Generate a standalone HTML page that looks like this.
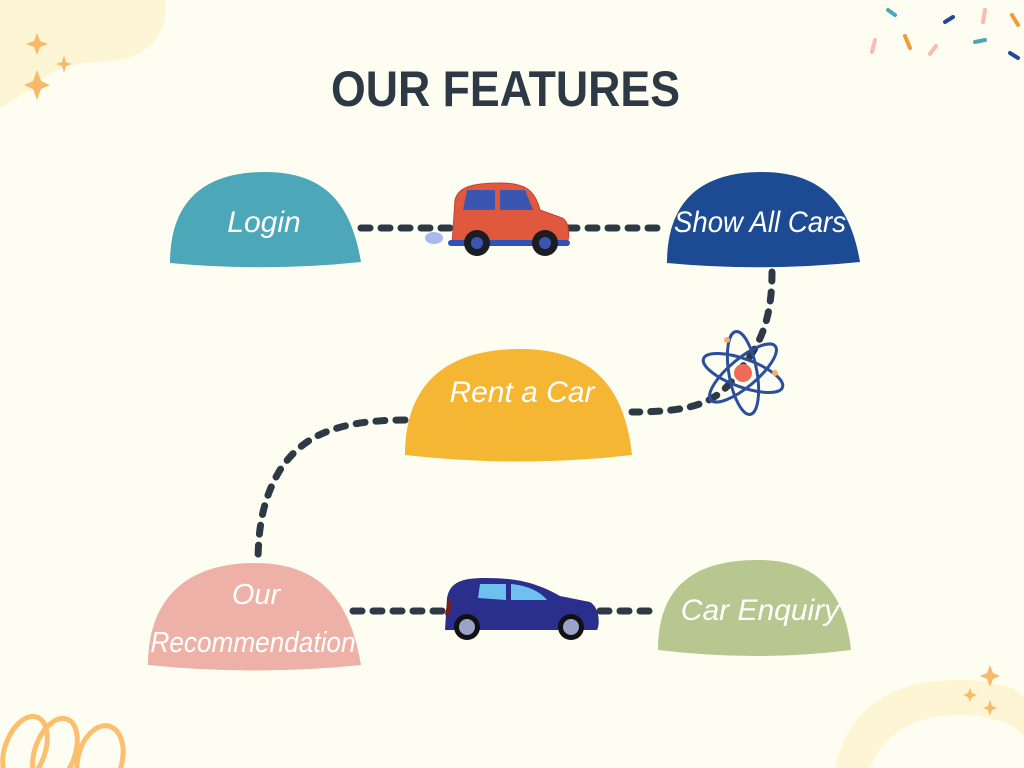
<!DOCTYPE html>
<html><head><meta charset="utf-8"><style>
html,body{margin:0;padding:0;width:1024px;height:768px;overflow:hidden;background:#fefdf2}
svg{display:block}
.t{font-family:"Liberation Sans",sans-serif;font-style:italic;fill:#fff}
</style></head><body>
<svg width="1024" height="768" viewBox="0 0 1024 768">
<rect width="1024" height="768" fill="#fefdf2"/>
<path d="M0,0 H165 C170,40 140,62 100,62 C70,62 50,70 30,90 L0,108 Z" fill="#fdf5d4"/>
<path d="M835,768 C850,700 900,680 960,680 C1000,680 1024,690 1024,700 V768 Z" fill="#fdf5d4"/>
<path d="M870,768 C885,730 920,715 960,715 C1000,715 1024,730 1024,740 V768 Z" fill="#fefdf2"/>
<g fill="#f8b968">
<path d="M37,33 l3,8 8,3 -8,3 -3,8 -3,-8 -8,-3 8,-3z"/>
<path d="M64,55 l2,7 6,2 -6,2 -2,7 -2,-7 -6,-2 6,-2z"/>
<path d="M37,70 l4,11 9,4 -9,4 -4,11 -4,-11 -9,-4 9,-4z"/>
<path d="M990,665 l3,8 7,3 -7,3 -3,8 -3,-8 -7,-3 7,-3z"/>
<path d="M970,688 l2,5 5,2 -5,2 -2,5 -2,-5 -5,-2 5,-2z"/>
<path d="M990,700 l2,6 5,2 -5,2 -2,6 -2,-6 -5,-2 5,-2z"/>
</g>
<g fill="none" stroke="#fcbf6f" stroke-width="5">
<ellipse cx="25" cy="750" rx="20" ry="35" transform="rotate(20 25 750)"/>
<ellipse cx="55" cy="752" rx="20" ry="35" transform="rotate(20 55 752)"/>
<ellipse cx="100" cy="760" rx="22" ry="35" transform="rotate(15 100 760)"/>
</g>
<g stroke-linecap="round" stroke-width="4" fill="none">
<path d="M888,10 l7,5" stroke="#4da6b8"/>
<path d="M945,22 l8,-5" stroke="#1e4b93"/>
<path d="M985,10 l-2,12" stroke="#fbb9b0"/>
<path d="M1012,15 l6,10" stroke="#f29b3a"/>
<path d="M872,52 l3,-12" stroke="#fbb9b0"/>
<path d="M905,36 l5,12" stroke="#f29b3a"/>
<path d="M930,54 l6,-8" stroke="#fbb9b0"/>
<path d="M975,42 l10,-2" stroke="#4da6b8"/>
<path d="M1010,53 l8,5" stroke="#1e4b93"/>
</g>
<text x="331" y="106" font-family="Liberation Sans,sans-serif" font-weight="bold" font-size="50" fill="#2d3a45" textLength="349" lengthAdjust="spacingAndGlyphs">OUR FEATURES</text>
<g fill="none" stroke="#2d3a45" stroke-width="7" stroke-linecap="round" stroke-dasharray="9 11">
<path d="M361,228 H450"/>
<path d="M568,228 H667"/>
<path d="M772,272 C772,320 760,345 740,370 C720,400 700,412 632,412"/>
<path d="M405,420 C330,420 300,440 280,470 C262,500 258,530 258,565"/>
<path d="M353,611 H445"/>
<path d="M600,611 H658"/>
</g>
<path d="M170,263 C170,205 200,172 265,172 C330,172 352,210 361,262 Q265,272 170,263Z" fill="#4ca7b9"/>
<path d="M667,263 C667,205 697,172 762,172 C827,172 851,210 860,262 Q762,272 667,263Z" fill="#1d4b93"/>
<path d="M405,455 C405,385 445,349 520,349 C595,349 625,390 632,455 Q520,468 405,455Z" fill="#f5b633"/>
<path d="M148,665 C148,600 185,563 255,563 C320,563 350,600 361,665 Q255,676 148,665Z" fill="#eeb1a7"/>
<path d="M658,650 C658,590 690,560 758,560 C820,560 845,595 851,650 Q758,662 658,650Z" fill="#b7c78f"/>
<text class="t" x="264" y="232" text-anchor="middle" font-size="30">Login</text>
<text class="t" x="760" y="232" text-anchor="middle" font-size="30" textLength="172" lengthAdjust="spacingAndGlyphs">Show All Cars</text>
<text class="t" x="522" y="402" text-anchor="middle" font-size="30">Rent a Car</text>
<text class="t" x="256" y="604" text-anchor="middle" font-size="29">Our</text>
<text class="t" x="253" y="652" text-anchor="middle" font-size="29" textLength="205" lengthAdjust="spacingAndGlyphs">Recommendation</text>
<text class="t" x="760" y="620" text-anchor="middle" font-size="30">Car Enquiry</text>
<g>
<ellipse cx="434" cy="238" rx="9" ry="6" fill="#a9b8f0"/>
<path d="M452,245 L455,200 C458,188 470,183 500,183 C525,183 535,190 540,210 L562,218 C570,222 570,240 566,245 Z" fill="#e0593f" stroke="#c6402e" stroke-width="1"/>
<path d="M463,210 L467,190 H495 V210Z" fill="#3a56b0"/>
<path d="M500,210 V190 H525 L533,210Z" fill="#3a56b0"/>
<rect x="448" y="240" width="122" height="6" rx="3" fill="#3052b5"/>
<circle cx="477" cy="243" r="13" fill="#1c1c24"/><circle cx="477" cy="243" r="6" fill="#3a56b0"/>
<circle cx="545" cy="243" r="13" fill="#1c1c24"/><circle cx="545" cy="243" r="6" fill="#3a56b0"/>
</g>
<g fill="none" stroke="#2b4f9a" stroke-width="3">
<ellipse cx="743" cy="373" rx="42" ry="14" transform="rotate(20 743 373)"/>
<ellipse cx="743" cy="373" rx="42" ry="14" transform="rotate(-40 743 373)"/>
<ellipse cx="743" cy="373" rx="42" ry="14" transform="rotate(80 743 373)"/>
</g>
<circle cx="743" cy="373" r="9" fill="#f06a5a"/>
<circle cx="727" cy="340" r="3" fill="#f5b06a"/><circle cx="775" cy="373" r="3" fill="#f5b06a"/>
<g>
<path d="M445,630 L447,598 C450,582 462,578 485,578 C515,578 535,582 560,596 L590,602 C600,608 600,625 597,630 Z" fill="#2a2f8e"/>
<path d="M478,598 L480,584 H506 V600Z" fill="#6ec0ee"/>
<path d="M511,600 V584 C530,586 540,592 547,600Z" fill="#6ec0ee"/>
<path d="M445,615 L448,600 L452,600 L450,615Z" fill="#7a1a25"/>
<circle cx="467" cy="627" r="13" fill="#111"/><circle cx="467" cy="627" r="8" fill="#9aa3c8"/>
<circle cx="571" cy="627" r="13" fill="#111"/><circle cx="571" cy="627" r="8" fill="#9aa3c8"/>
</g>
</svg>
</body></html>
